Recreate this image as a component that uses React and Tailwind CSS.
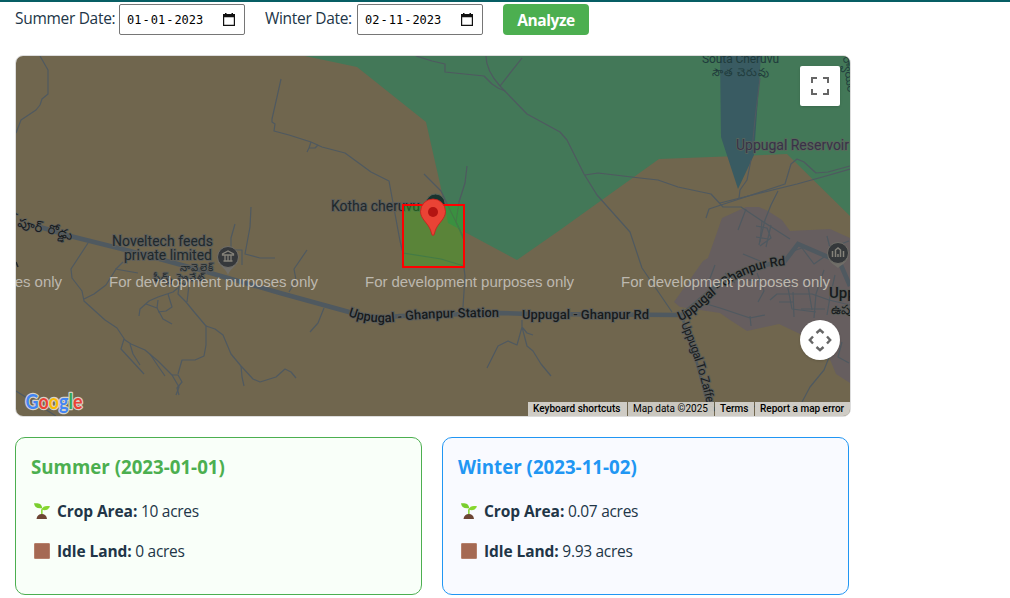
import React from "react";

const roads = [
  "M40 56L48 70V94L42 99L40 105L36 110L21 120L16 133",
  "M281 79L277 97L272 119V122L275 124L274 131L289 135L311 142L322 147L345 153L371 172L389 181L400 241L403 253L441 259L464 266",
  "M311 142L309 148L307 152M309 148L315 148L318 145",
  "M416 56L432 61L445 64V72L484 76L492 84L498 88L505 91",
  "M486 56C486 66 491 76 500 86L527 114L560 132L567 140L584 174L597 195L622 223L630 232L642 268L672 312",
  "M522 58L500 86",
  "M424 174L441 191L451 212L464 238",
  "M467 166L465 183L459 202L456 222L464 240V268L465 276L463 307",
  "M251 207L250 227L245 254L260 258H275",
  "M235 224L231 238V250H242V265",
  "M88 243L71 269L72 278L82 291L84 301L105 320L117 328L125 340L131 344L145 350L158 361L172 375L179 387L176 395",
  "M84 299L94 294L106 285L116 269L123 262M115 269L138 273",
  "M124 339L121 349L144 374M130 344L133 354L140 365",
  "M150 354L158 366L165 376M172 375H178L182 382L177 388L179 395",
  "M178 374L182 360H195L204 356L206 345L206 326L195 313L186 302L178 294L179 286",
  "M206 326L215 329L223 335L231 354L241 366L253 379L260 382L276 377L285 369L291 372L296 378",
  "M241 366L242 377L244 386",
  "M139 316L140 309L149 301L158 297L173 292L179 287M146 304L157 308L163 319L172 324",
  "M157 308L158 300M168 294L172 307L166 311L158 312",
  "M187 302L189 285",
  "M307 250L294 269L296 280L289 292",
  "M324 308L318 323L310 332",
  "M522 320L522 327L517 345L508 341L498 346L487 368M522 327L527 333L533 335M522 327L527 346L533 351L541 364L551 376",
  "M585 175L598 173L640 178L658 180L678 187L711 194L723 207L741 207L762 221L790 239",
  "M706 218L709 209L721 205L785 184L791 164L797 159L804 162L816 173L828 172L850 166",
  "M720 203L797 184L826 176L850 169",
  "M760 78L755 119L752 150M751 160L747 180L740 190L739 198",
  "M778 191L771 205L765 220L759 245M746 209L738 230",
  "M756 226L767 228L771 238L760 246M762 221L760 242M771 225L766 247M756 237L768 239",
  "M743 254L760 261M725 273L735 283M715 265L709 281",
  "M700 302L720 308L735 313L750 318L765 315M750 316L751 326",
  "M770 300L777 294H812L829 300L850 305M786 278L792 309L816 312",
  "M793 292L794 317M807 280L812 310M824 270L816 294L814 318M835 275L830 297L827 315",
  "M757 273L764 291L758 302M747 280L760 281M779 302H793M801 309H825",
  "M793 251L802 248L814 264L824 257M827 236L830 248L849 241M849 250L831 262",
  "M832 350L824 370L810 387L802 402M842 342L838 357L849 363",
  "M16 391L56 416M742 416L755 406L767 416",
];

const Watermark = ({ x }) => (
  <text x={x} y="287" fontSize="15" fill="#bdb8ae" textLength="209" fontFamily="Liberation Sans, Arial, sans-serif">
    For development purposes only
  </text>
);

function MapDrawing() {
  const halo = { stroke: "#5d5e5b", strokeWidth: 2, paintOrder: "stroke" };
  return (
    <svg viewBox="16 56 834 360" className="block h-full w-full" fontFamily="Roboto, 'Noto Sans', sans-serif">
      <defs>
        <path id="station" d="M348 316Q372 325 400 321T503 317" />
        <path id="ghanpur" d="M680 321C706 313 722 268 790 265" />
        <path id="zaffer" d="M681 324C689 343 701 372 709 416" />
        <path id="westroad" d="M6 221Q24 229 40 232T80 243" />
      </defs>
      <rect x="16" y="56" width="834" height="360" fill="#70664e" />
      <path d="M305 56L357 67L426 122L441 188L448 223L517 260L560 230L659 159L787 154L850 216V56Z" fill="#437858" />
      <path d="M720 56L721 137L738 189L754 155L759 83L761 56Z" fill="#395b62" />
      <path d="M722 218L746 207H759L768 211L782 220L790 231L830 229L850 238V383L836 374L829 357L800 334L779 324L747 331L730 320L720 313L680 307L674 302L703 261L708 258Z" fill="#665e5f" />
      <g fill="none" stroke="#4f5960" strokeWidth="1.200" strokeLinejoin="round">
        {roads.map((d) => <path key={d} d={d} />)}
      </g>
      <g fill="none" stroke="#4f5960" strokeWidth="4.500">
        <path d="M40 227L70 236L130 251L200 270L280 293L349 312Q370 320 400 316L500 313L530 314L682 315" />
        <path d="M682 315Q705 296 722 281Q745 268 785 261L798 244L835 260M840 263L850 286" />
        <path d="M682 317L694 352L708 405" strokeWidth="2.500" />
      </g>
      <path d="M16 262L18 267" stroke="#24292c" strokeWidth="1.500" />

      <g fill="#20282b" fontSize="14">
        <g {...halo}>
          <text x="331" y="211" textLength="89">Kotha cheruvu</text>
          <text x="112" y="246" textLength="101">Noveltech feeds</text>
          <text x="124" y="260" textLength="88">private limited</text>
          <text x="180" y="271" fontSize="10" textLength="33">నావెలెక్</text>
          <text x="153" y="281" fontSize="10" textLength="52">ఫీడ్స్ ప్రైవేట్</text>
        </g>
        <text x="702" y="63" fontSize="12" textLength="77" fill="#203b3c">Souta Cheruvu</text>
        <text x="712" y="76" fontSize="11" textLength="57" fill="#203b3c">సౌత చెరువు</text>
        <text x="736" y="150" textLength="113" fill="#373348" stroke="#5b665b" strokeWidth="1.500" paintOrder="stroke">Uppugal Reservoir</text>
        <text transform="translate(843 57) rotate(83)" fontSize="11" fill="#203b3c">ర్వాయర్</text>
      </g>
      <g fill="#171b1d" fontSize="13" fontWeight="500" {...halo}>
        <text textLength="152"><textPath href="#station" textLength="152">Uppugal - Ghanpur Station</textPath></text>
        <text x="522" y="319" textLength="127">Uppugal - Ghanpur Rd</text>
        <text textLength="122"><textPath href="#ghanpur" textLength="122">Uppugal - Ghanpur Rd</textPath></text>
        <text fontSize="12" fontWeight="400"><textPath href="#zaffer" textLength="93">Uppugal To Zafferg</textPath></text>
        <text strokeWidth="1.500"><textPath href="#westroad" textLength="69">న్‌పూర్ రోడ్డు</textPath></text>
        <text x="829" y="298" fontSize="15">Uppugal</text>
        <text x="831" y="314" fontSize="13">ఉప్పుగల్</text>
      </g>

      <g>
        <path d="M218 262C221 267 226 269 228 275C230 269 235 267 238 262Z" fill="#706e68" />
        <circle cx="228" cy="257" r="10.500" fill="#35383b" stroke="#706e68" />
        <path d="M222.500 255V254L228 251L233.500 254V255ZM223.500 261H232.500M225 255V261M228 255V261M231 255V261" fill="none" stroke="#85827a" strokeWidth="1.300" />
        <path d="M828 258C831 264 835 265 838 268C841 265 845 264 848 258Z" fill="#706e68" />
        <circle cx="838" cy="253" r="10.500" fill="#35383b" stroke="#706e68" />
        <path d="M832.500 257V251M835.500 257V250L838 248L840.500 250V257M843.500 257V251M838 257V254" fill="none" stroke="#85827a" strokeWidth="1.500" />
        <circle cx="435.500" cy="203.500" r="9.500" fill="#19332e" stroke="#56635a" />
      </g>

      <path d="M403 205H464V267H403Z" fill="#27ca0b" fillOpacity="0.300" stroke="#ff0000" strokeWidth="2" />
      <path d="M433 235.500C431.800 235.500 431.700 233.500 430.500 230C428 223 420.500 219 420.500 211.500A12.500 12.500 0 0 1 445.500 211.500C445.500 219 438 223 435.500 230C434.300 233.500 434.200 235.500 433 235.500Z" fill="#ea4335" stroke="#c5221f" strokeWidth="0.900" />
      <circle cx="433" cy="212" r="5" fill="#b31412" />

      <Watermark x="-147" />
      <Watermark x="109" />
      <Watermark x="365" />
      <Watermark x="621" />

      <g fontFamily="Lato, sans-serif" fontSize="20" fontWeight="700" stroke="#d5d1c9" strokeWidth="2.500" paintOrder="stroke" strokeLinejoin="round">
        <text x="25.500" y="409" textLength="57" lengthAdjust="spacingAndGlyphs">
          <tspan fill="#4285f4">G</tspan><tspan fill="#ea4335">o</tspan><tspan fill="#fbbc04">o</tspan><tspan fill="#4285f4">g</tspan><tspan fill="#34a853">l</tspan><tspan fill="#ea4335">e</tspan>
        </text>
      </g>
    </svg>
  );
}

function MapPanel() {
  return (
    <div className="relative h-[362px] w-[836px] overflow-hidden rounded-lg border border-[#ddd]">
      <MapDrawing />
      <button aria-label="Fullscreen" className="absolute right-[10px] top-[10px] flex size-10 items-center justify-center rounded-xs bg-white shadow">
        <svg width="18" height="18" viewBox="0 0 18 18" fill="none" stroke="#666" strokeWidth="2">
          <path d="M1 6V1H6M12 1H17V6M17 12V17H12M6 17H1V12" />
        </svg>
      </button>
      <button aria-label="Map camera controls" className="absolute right-[10px] top-[264px] flex size-10 items-center justify-center rounded-full bg-white shadow">
        <svg width="24" height="24" viewBox="0 0 24 24" fill="none" stroke="#666" strokeWidth="2.400">
          <path d="M8.500 5L12 1.800L15.500 5M8.500 19L12 22.200L15.500 19M5 8.500L1.800 12L5 15.500M19 8.500L22.200 12L19 15.500" />
        </svg>
      </button>
      <div className="absolute bottom-0 right-0 flex h-[14px] w-[322px] gap-px font-[Roboto,sans-serif] text-[10px] leading-[14px] text-black">
        <span className="w-[99px] whitespace-nowrap bg-[#cfccc5] pl-[5px] font-medium">Keyboard shortcuts</span>
        <span className="w-[86px] whitespace-nowrap bg-[#cfccc5]/95 pl-[5px]">Map data ©2025</span>
        <span className="w-[39px] whitespace-nowrap bg-[#cfccc5] pl-[5px] font-medium">Terms</span>
        <span className="flex-1 whitespace-nowrap bg-[#cfccc5] pl-[5px] font-medium">Report a map error</span>
      </div>
    </div>
  );
}

function DateField({ label, labelWidth, parts }) {
  return (
    <label className="flex h-[31px] items-center">
      <span className={`-mt-0.5 whitespace-nowrap tracking-[-0.3px] ${labelWidth}`}>{label}</span>
      <span className="flex h-[31px] w-[126px] items-center justify-between rounded-[2px] border border-[#767676] bg-white pl-[7px] pr-[9px] font-['DejaVu_Sans_Mono',monospace] text-[12px] text-black">
        <span className="flex gap-px">
          <span>{parts[0]}</span><span>-</span><span>{parts[1]}</span><span>-</span><span>{parts[2]}</span>
        </span>
        <svg width="12" height="13" viewBox="0 0 12 13">
          <path d="M2 0H3.500V1H8.500V0H10V1H12V13H0V1H2ZM1.200 4.200V11.800H10.800V4.200Z" fill="#111" fillRule="evenodd" />
        </svg>
      </span>
    </label>
  );
}

const Sprout = () => (
  <svg width="16" height="16" viewBox="0 0 16 16">
    <path d="M7.100 13V7Q7.100 5.500 9 5L9 6Q8.600 6.300 8.600 8V13Z" fill="#86d72f" />
    <path d="M0 .300C4-.300 8 .500 8.200 5.200C3 6 .300 4 0 .300Z" fill="#7ace2e" />
    <path d="M8 6.500C8.500 3 12 2.500 16 3.300C14.500 7 11 8 8 6.500Z" fill="#86d72f" />
    <path d="M2.500 16C3 12.800 5 11 7.800 11S12.700 12.800 13 16Z" fill="#6d4534" />
  </svg>
);

const IdleSquare = () => <span className="block size-4 rounded-[1px] border border-[#b5806b] bg-[#a56953]" />;

function Stat({ icon, name, value }) {
  return (
    <p className="flex h-6 items-center">
      <span className="ml-[3px] mr-[7px] size-4">{icon}</span>
      <span className="relative top-px whitespace-pre"><b className="tracking-[-0.08px]">{name}</b><span className="tracking-[-0.3px]"> {value}</span></span>
    </p>
  );
}

function SeasonCard({ title, crop, idle, tone }) {
  return (
    <section className={`h-[158px] w-[407px] rounded-[10px] border px-[15px] pt-[14px] ${tone.card}`}>
      <h3 className={`h-[30px] whitespace-nowrap text-[18.7px] font-bold leading-[30px] ${tone.title}`}>{title}</h3>
      <div className="mt-[17px] flex flex-col gap-4">
        <Stat icon={<Sprout />} name="Crop Area:" value={crop} />
        <Stat icon={<IdleSquare />} name="Idle Land:" value={idle} />
      </div>
    </section>
  );
}

export default function App() {
  return (
    <main className="h-[598px] overflow-hidden border-t-2 border-[#075e64] bg-white px-[15px] font-['Open_Sans','Noto_Sans',sans-serif] text-[15.5px] text-[#213547]">
      <div className="mt-0.5 flex h-[31px] items-center">
        <DateField label="Summer Date:" labelWidth="w-[104px]" parts={["01", "01", "2023"]} />
        <div className="ml-5 flex">
          <DateField label="Winter Date:" labelWidth="w-[92px]" parts={["02", "11", "2023"]} />
        </div>
        <button className="ml-5 h-[31px] w-[86px] rounded bg-[#4caf50] pt-0.5 text-[15.5px] font-bold tracking-[-0.4px] text-white">Analyze</button>
      </div>
      <div className="mt-5"><MapPanel /></div>
      <div className="mt-5 flex gap-5">
        <SeasonCard title="Summer (2023-01-01)" crop="10 acres" idle="0 acres" tone={{ card: "border-[#4caf50] bg-[#f9fff9]", title: "text-[#4caf50]" }} />
        <SeasonCard title="Winter (2023-11-02)" crop="0.07 acres" idle="9.93 acres" tone={{ card: "border-[#2196f3] bg-[#f9faff]", title: "text-[#2196f3]" }} />
      </div>
    </main>
  );
}
